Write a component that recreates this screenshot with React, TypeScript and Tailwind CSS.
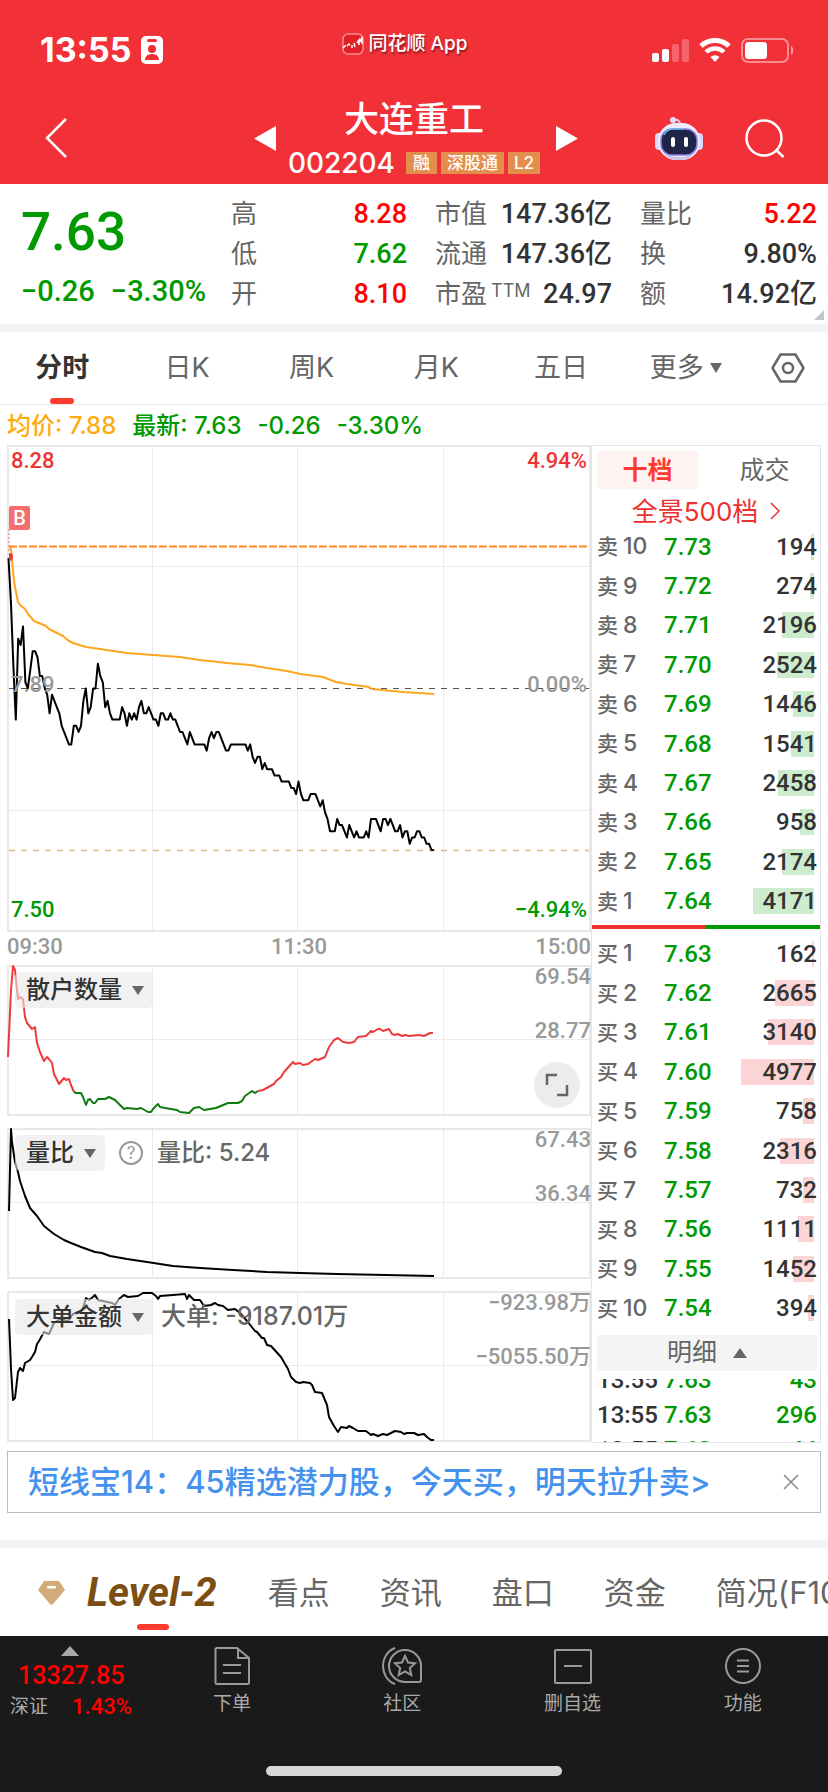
import React, { useState } from "react";
import clsx from "clsx";

const PREV_CLOSE = 789;

// one price per minute since the open, as ticks of 0.01 away from the previous close
const ticks = [
  21, 14, 4, -5, 8, 7, 10, 1, 0, 3, 6, 6, 5, 2, 2, 0, -1, -4, -1, -2,
  -3, -4, -6, -7, -8, -9, -9, -6, -6, -7, -6, -2, 0, -4, -3, 0, 0, 4, 2, 1,
  -3, -2, -4, -5, -5, -5, -5, -3, -4, -6, -4, -5, -4, -5, -3, -2, -4, -4, -3, -4,
  -5, -5, -6, -4, -4, -5, -5, -4, -5, -5, -6, -7, -7, -8, -9, -7, -8, -9, -9, -9,
  -9, -9, -10, -8, -7, -8, -7, -7, -8, -9, -10, -10, -9, -9, -9, -9, -9, -9, -9, -10,
  -9, -11, -12, -11, -11, -13, -12, -13, -13, -13, -14, -14, -14, -15, -15, -15, -15, -16, -16, -17,
  -15, -17, -18, -18, -18, -17, -17, -17, -18, -19, -18, -20, -21, -23, -23, -23, -21, -22, -22, -23,
  -24, -22, -23, -24, -23, -24, -24, -24, -23, -24, -21, -21, -21, -22, -23, -21, -21, -22, -21, -22,
  -23, -23, -22, -24, -23, -23, -25, -24, -24, -23, -23, -24, -24, -25, -25, -26, -26,
];

const pricePoints = ticks
  .map((t, i) => `${(1.5 + i * 2.417).toFixed(1)},${(243.5 - t * 6.21).toFixed(1)}`)
  .join(" ");

const avgPoints =
  "2,102 4,103 6,127 8,142 11,157 13,160 18,164 21,169 27,176 39,181 42,184 56,191 62,196 66,198 79,202 93,204 120,208 146,210 173,212 193,215 220,218 243,220 260,223 280,226 293,229 316,232 329,237 340,239 362,242 365,244 396,247 427,249";

const retailFall =
  "1,92 4,25 6,1 8,5 11,34 13,32 16,34 18,52 20,58 25,64 28,62 30,78 33,87 37,96 40,92 42,94 45,98 47,109 52,119 57,113 59,115 62,114 64,120 67,127";
const retailLow =
  "67,127 69,128 74,128 76,132 79,140 81,135 83,134 86,138 88,138 91,134 98,134 102,132 108,135 112,139 117,144 120,143 130,144 134,143 141,147 144,147 146,144 151,139 153,142 158,143 170,145 173,147 182,148 187,143 192,142 197,145 209,143 221,138 231,138 235,136 238,131 245,126 248,128 251,126";
const retailRise =
  "251,126 256,125 267,119 269,116 274,112 277,107 286,97 288,99 293,98 296,100 301,99 308,94 311,95 318,92 322,82 327,75 331,73 336,77 342,78 347,77 351,72 359,71 364,66 366,67 371,64 373,64 376,66 382,64 385,69 388,70 391,69 395,71 398,70 402,71 412,70 417,71 423,68 426,68";

const ratioPoints =
  "2,83 4,1 5,14 8,34 11,44 13,53 16,62 18,68 23,80 30,88 37,98 47,106 57,112 64,115 74,119 88,124 95,125 103,128 120,131 140,134 166,138 193,140 226,142 260,144 293,145 330,146 427,148";

const bigOrderPoints =
  "2,28 4,78 6,109 8,107 11,81 13,77 16,80 18,72 23,69 25,66 28,61 30,53 32,50 37,41 42,43 47,32 53,28 61,30 66,23 74,20 76,17 79,7 82,9 86,6 88,4 91,9 105,12 108,14 112,8 117,4 121,6 131,5 136,2 145,2 149,5 151,8 153,5 166,4 178,3 180,8 182,4 187,9 193,9 197,15 204,14 208,12 211,14 216,15 221,19 228,18 233,22 240,30 248,40 250,41 255,47 257,47 260,54 264,55 274,66 281,78 284,86 289,91 293,92 296,91 303,92 305,94 308,101 315,102 320,114 322,126 327,135 331,141 334,136 340,137 342,135 346,137 351,140 359,140 364,144 366,143 371,145 376,143 380,144 388,140 394,141 397,143 400,142 407,142 411,144 417,143 420,146 424,149 427,149";

const sellVolumes = [194, 274, 2196, 2524, 1446, 1541, 2458, 958, 2174, 4171];
const buyVolumes = [162, 2665, 3140, 4977, 758, 2316, 732, 1111, 1452, 394];
const MAX_VOLUME = 4977;

const sells = sellVolumes.map((volume, i) => ({ label: "卖", level: 10 - i, price: ((773 - i) / 100).toFixed(2), volume }));
const buys = buyVolumes.map((volume, i) => ({ label: "买", level: i + 1, price: ((763 - i) / 100).toFixed(2), volume }));

const trades = [
  { time: "13:55", price: "7.63", volume: 43 },
  { time: "13:55", price: "7.63", volume: 296 },
  { time: "13:55", price: "7.63", volume: 44 },
];

const NUM = "font-[family-name:Roboto,'Noto_Sans_CJK_SC',sans-serif] font-medium";

function StatusBar() {
  return (
    <div className="grid grid-cols-3 items-center h-[100px] pl-10 pr-[34px]">
      <div className="flex items-center gap-[10px]">
        <span className="text-[34px] leading-9 font-bold">13:55</span>
        <svg width="22" height="28" viewBox="0 0 22 28" aria-hidden="true">
          <rect width="22" height="28" rx="5" fill="#fff" />
          <rect x="6" y="3" width="10" height="3" rx="1.5" fill="#f23038" />
          <circle cx="11" cy="13" r="4" fill="#f23038" />
          <path d="M4 24c0-4 3-6 7-6s7 2 7 6z" fill="#f23038" />
        </svg>
      </div>
      <div className="flex items-center justify-center gap-1 pb-3 pr-6">
        <svg width="22" height="22" viewBox="0 0 22 22" fill="none" aria-hidden="true">
          <rect x="1" y="1" width="20" height="20" rx="5" fill="#e01f27" stroke="#f98d91" strokeWidth="1.5" />
          <path d="M1 15l2-2v1M5 13l2-2 1 1M10 12v3M12 10l1 4M15 10l2-3v5M18 9l2-5v7" stroke="#fff" strokeWidth="1.5" />
        </svg>
        <span className="text-[19px] leading-6 font-medium whitespace-nowrap [text-shadow:1px_2px_2px_rgba(0,0,0,0.45)]">
          同花顺 App
        </span>
      </div>
      <div className="flex items-center justify-end gap-2.5">
        <svg width="37" height="23" viewBox="0 0 37 23" fill="#fff" aria-hidden="true">
          <rect y="14" width="7" height="9" rx="2" />
          <rect x="10" y="10" width="7" height="13" rx="2" />
          <rect x="20" y="5" width="7" height="18" rx="2" opacity="0.25" />
          <rect x="30" width="7" height="23" rx="2" opacity="0.25" />
        </svg>
        <svg width="32" height="24" viewBox="0 0 32 24" fill="none" stroke="#fff" aria-hidden="true">
          <path d="M2 8a20.5 20.5 0 0 1 28 0" strokeWidth="5" />
          <path d="M7 14a13 13 0 0 1 18 0" strokeWidth="4.5" />
          <path d="M16 24l-4.5-5a6.5 6.5 0 0 1 9 0z" fill="#fff" stroke="none" />
        </svg>
        <svg width="53" height="25" viewBox="0 0 53 25" fill="none" aria-hidden="true">
          <rect x="1" y="1" width="46" height="23" rx="6" stroke="#fff" strokeOpacity="0.45" strokeWidth="2" />
          <rect x="4" y="4" width="22" height="17" rx="3.5" fill="#fff" />
          <path d="M50 8c3 1 3 8 0 9z" fill="#fff" fillOpacity="0.5" />
        </svg>
      </div>
    </div>
  );
}

function RobotIcon() {
  return (
    <svg width="48" height="46" viewBox="0 0 48 46" fill="none" aria-hidden="true">
      <path d="M18 4c4-1 7 0 7 5" stroke="#d9d5f5" strokeWidth="2" />
      <circle cx="18" cy="4" r="3" fill="#e6dcf5" />
      <rect x="0" y="17" width="8" height="17" rx="4" fill="#d5d8f8" />
      <rect x="40" y="17" width="8" height="17" rx="4" fill="#d5d8f8" />
      <rect x="3" y="7" width="42" height="37" rx="18" fill="#edecfb" />
      <path d="M8 35c6 8 26 8 32 0-3 7-9 9-16 9s-13-2-16-9z" fill="#c9c6ec" />
      <rect x="6" y="13" width="36" height="26" rx="11" fill="#1f2547" stroke="#8f7be8" strokeWidth="1.5" />
      <path d="M9 19c2-4 5-6 10-6h10" stroke="#4fd5e8" strokeWidth="1.2" />
      <rect x="16" y="21" width="4" height="10" rx="2" fill="#fff" />
      <rect x="29" y="21" width="4" height="10" rx="2" fill="#fff" />
    </svg>
  );
}

function Header() {
  return (
    <header className="bg-[#f23038] text-white">
      <StatusBar />
      <div className="grid grid-cols-[1fr_auto_1fr] h-[84px]">
        <div className="flex justify-between items-start pl-[44px] pt-[18px]">
          <button aria-label="返回">
            <svg width="24" height="40" viewBox="0 0 24 40" fill="none" stroke="#fff" strokeWidth="2.5">
              <path d="M22 1L3 20l19 19" />
            </svg>
          </button>
          <button aria-label="上一只" className="pt-2 pr-3">
            <svg width="22" height="25" viewBox="0 0 22 25" fill="#fff">
              <path d="M22 0v25L0 12.5z" />
            </svg>
          </button>
        </div>
        <div className="flex flex-col items-center">
          <h1 className="text-[35px] leading-[38px] font-medium">大连重工</h1>
          <div className="flex items-center gap-1 h-[34px] mt-2 text-[17px] font-medium">
            <span className="text-[28px] font-medium pr-[7px]">002204</span>
            <span className="h-[22px] leading-[22px] px-[7px] bg-[#e38e4c]">融</span>
            <span className="h-[22px] leading-[22px] px-[6px] bg-[#e38e4c]">深股通</span>
            <span className="h-[22px] leading-[22px] px-[6px] bg-[#e38e4c]">L2</span>
          </div>
        </div>
        <div className="flex justify-between items-start pr-[43px] pt-4">
          <button aria-label="下一只" className="pt-[10px] pl-4">
            <svg width="22" height="25" viewBox="0 0 22 25" fill="#fff">
              <path d="M0 0v25l22-12.5z" />
            </svg>
          </button>
          <div className="flex items-start gap-[42px]">
            <button aria-label="智能助手">
              <RobotIcon />
            </button>
            <button aria-label="搜索" className="pt-[3px]">
              <svg width="40" height="39" viewBox="0 0 40 39" fill="none" stroke="#fff" strokeWidth="2.5">
                <circle cx="19" cy="19" r="17.5" />
                <path d="M31 31l7.5 7" />
              </svg>
            </button>
          </div>
        </div>
      </div>
    </header>
  );
}

type Stat = { label: string; value: string; color?: string; sup?: string };

const statColumns: Stat[][] = [
  [
    { label: "高", value: "8.28", color: "text-[#ff0000]" },
    { label: "低", value: "7.62", color: "text-[#009900]" },
    { label: "开", value: "8.10", color: "text-[#ff0000]" },
  ],
  [
    { label: "市值", value: "147.36亿" },
    { label: "流通", value: "147.36亿" },
    { label: "市盈", value: "24.97", sup: "TTM" },
  ],
  [
    { label: "量比", value: "5.22", color: "text-[#ff0000]" },
    { label: "换", value: "9.80%" },
    { label: "额", value: "14.92亿" },
  ],
];

function Quote() {
  return (
    <section className="relative grid grid-cols-[minmax(0,1fr)_176px_177px_177px] gap-x-7 pl-[21px] pr-[11px] pt-[10px] h-[140px]">
      <div className={clsx(NUM, "text-[#009900] whitespace-nowrap")}>
        <div className="text-[53px] leading-[76px]">7.63</div>
        <div className="flex gap-4 text-[29px] leading-[42px]">
          <span>−0.26</span>
          <span>−3.30%</span>
        </div>
      </div>
      {statColumns.map((col, i) => (
        <dl key={i}>
          {col.map((s) => (
            <div key={s.label} className="flex justify-between h-10 leading-10 whitespace-nowrap">
              <dt className="flex text-[26px] text-[#666]">
                {s.label}
                {s.sup && <span className="text-[18px] leading-[34px] pl-1">{s.sup}</span>}
              </dt>
              <dd className={clsx(NUM, "text-[27px]", s.color ?? "text-[#333]")}>{s.value}</dd>
            </div>
          ))}
        </dl>
      ))}
      <svg className="absolute right-1 bottom-1" width="10" height="10" aria-hidden="true">
        <path d="M10 0v10H0z" fill="#c4c4c4" />
      </svg>
    </section>
  );
}

const periods = ["分时", "日K", "周K", "月K", "五日", "更多"];

function PeriodTabs() {
  const [active, setActive] = useState("分时");
  return (
    <nav className="flex h-[73px] border-b border-[#ebebeb]">
      {periods.map((p) => (
        <button
          key={p}
          onClick={() => setActive(p)}
          className={clsx(
            "relative flex-1 flex items-center justify-center text-[27px]",
            p === active ? "font-bold text-[#333]" : "text-[#666]"
          )}
        >
          {p}
          {p === "更多" && (
            <svg className="ml-1.5" width="12" height="10" aria-hidden="true">
              <path d="M0 0h12L6 10z" fill="#666" />
            </svg>
          )}
          {p === active && <span className="absolute bottom-0 w-6 h-1.5 rounded-[3px] bg-[#ff3b30]" />}
        </button>
      ))}
      <button aria-label="设置" className="w-20 flex items-center justify-center">
        <svg width="34" height="30" viewBox="0 0 34 30" fill="none" stroke="#666" strokeWidth="2.5">
          <path d="M9.5 1.5h15L32.5 15l-8 13.5h-15L1.5 15z" strokeLinejoin="round" />
          <circle cx="17" cy="15" r="5" />
        </svg>
      </button>
    </nav>
  );
}

function GridLines({ rows, height }: { rows: number[]; height: number }) {
  return (
    <g stroke="#ebebeb">
      {[145.5, 290.5, 436.5].map((x) => (
        <line key={x} x1={x} x2={x} y1="0" y2={height} />
      ))}
      {rows.map((y) => (
        <line key={y} x1="0" x2="584" y1={y} y2={y} />
      ))}
    </g>
  );
}

function PriceChart() {
  return (
    <div className={clsx(NUM, "relative h-[487px] text-[22px] leading-7")}>
      <svg className="block w-full h-full" viewBox="0 0 584 487" preserveAspectRatio="none" fill="none">
        <GridLines rows={[121.5, 365.5]} height={487} />
        <line x1="2" x2="584" y1="243.5" y2="243.5" stroke="#555" strokeDasharray="6 6" />
        <line x1="2" x2="584" y1="405.5" y2="405.5" stroke="#dcb88a" strokeWidth="1.5" strokeDasharray="6 6" />
        <line x1="2" x2="580" y1="101.5" y2="101.5" stroke="#ff8a1f" strokeWidth="2" strokeDasharray="8 2" />
        <rect x="1" y="1" width="582" height="485" stroke="#e8e8e8" strokeWidth="2" />
        <polyline points={pricePoints} stroke="#000" strokeWidth="2" strokeLinejoin="round" />
        <polyline points={avgPoints} stroke="#ffa51f" strokeWidth="2" strokeLinejoin="round" />
        <path d="M2 84v24" stroke="#f46e6e" strokeDasharray="2 2" />
        <path d="M2 108a4 4 0 0 1 0 8z" fill="#ee3a3a" />
      </svg>
      <span className="absolute left-1 top-[2px] text-[#ee3333]">8.28</span>
      <span className="absolute right-1 top-[2px] text-[#ee3333]">4.94%</span>
      <span className="absolute left-1 top-[226px] text-[#999]">{(PREV_CLOSE / 100).toFixed(2)}</span>
      <span className="absolute right-1 top-[226px] text-[#999]">0.00%</span>
      <span className="absolute left-1 bottom-2 text-[#009900]">7.50</span>
      <span className="absolute right-1 bottom-2 text-[#009900]">−4.94%</span>
      <span className="absolute left-0.5 top-[61px] w-[21px] h-6 rounded-xs bg-[#f46e6e] text-white text-[20px] leading-6 text-center">
        B
      </span>
    </div>
  );
}

type PanelProps = {
  name: string;
  values: [string, string];
  note?: string;
  help?: boolean;
  children: React.ReactNode;
};

function IndicatorPanel({ name, values, note, help, children }: PanelProps) {
  return (
    <div className="relative h-[151px]">
      <svg className="block w-full h-full" viewBox="0 0 584 151" preserveAspectRatio="none" fill="none" strokeWidth="2" strokeLinejoin="round">
        <g strokeWidth="1">
          <GridLines rows={[74.5]} height={151} />
        </g>
        <rect x="1" y="1" width="582" height="149" stroke="#e8e8e8" />
        {children}
      </svg>
      <div className="absolute left-2 top-[7px] flex items-center text-[24px] text-[#666]">
        <div className="relative">
          <select
            aria-label="指标"
            defaultValue={name}
            className="block field-sizing-content appearance-none h-9 pl-[11px] pr-[31px] rounded-[5px] bg-[#e8e8e8]/60 font-medium text-[#333]"
          >
            <option>{name}</option>
          </select>
          <svg className="absolute right-[9px] top-[14px] pointer-events-none" width="12" height="9" aria-hidden="true">
            <path d="M0 0h12L6 9z" fill="#666" />
          </svg>
        </div>
        {help && (
          <button aria-label="说明" className="ml-[14px] size-6 rounded-full border-2 border-[#999] text-[17px] leading-5 text-[#999]">
            ?
          </button>
        )}
        {note && <span className={clsx("font-medium", help ? "ml-[14px] text-[24px]" : "ml-2 text-[25px]")}>{note}</span>}
      </div>
      <div className={clsx(NUM, "absolute right-0 -top-1 text-right text-[22px] text-[#999]")}>
        <div className="leading-8">{values[0]}</div>
        <div className="leading-8 mt-[22px]">{values[1]}</div>
      </div>
    </div>
  );
}

function Charts() {
  return (
    <div className="flex-1 min-w-0">
      <PriceChart />
      <div className={clsx(NUM, "grid grid-cols-3 h-[33px] text-[22px] leading-[30px] text-[#999]")}>
        <span>09:30</span>
        <span className="text-center">11:30</span>
        <span className="text-right">15:00</span>
      </div>
      <div className="flex flex-col gap-3">
        <div className="relative">
          <IndicatorPanel name="散户数量" values={["69.54", "28.77"]}>
            <polyline points={retailFall} stroke="#ee3a3a" />
            <polyline points={retailLow} stroke="#107a10" />
            <polyline points={retailRise} stroke="#ee3a3a" />
          </IndicatorPanel>
          <button aria-label="全屏" className="absolute right-[11px] bottom-2 size-[46px] rounded-full bg-[#ececec] flex items-center justify-center">
            <svg width="24" height="24" viewBox="0 0 24 24" fill="none" stroke="#666" strokeWidth="2.5">
              <path d="M2 12V2h10M22 12v10H12" />
            </svg>
          </button>
        </div>
        <IndicatorPanel name="量比" values={["67.43", "36.34"]} note="量比: 5.24" help>
          <polyline points={ratioPoints} stroke="#000" />
        </IndicatorPanel>
        <IndicatorPanel name="大单金额" values={["−923.98万", "−5055.50万"]} note="大单: -9187.01万">
          <polyline points={bigOrderPoints} stroke="#000" />
        </IndicatorPanel>
      </div>
    </div>
  );
}

function DepthTable({ rows, barColor }: { rows: typeof sells; barColor: string }) {
  return (
    <table className="w-full h-[394px] text-[24px] leading-[26px]">
      <tbody>
        {rows.map((r) => (
          <tr key={r.level}>
            <td className="w-[67px] p-0 text-[23px] font-medium text-[#666] whitespace-nowrap">
              <span className="text-[21px] pr-[5px]">{r.label}</span>
              {r.level}
            </td>
            <td className={clsx(NUM, "p-0 text-[#009900]")}>{r.price}</td>
            <td className={clsx(NUM, "p-0 text-right text-[#333]")}>
              <span className="relative block">
                <span
                  className={clsx("absolute right-[3px] top-0 h-[26px]", barColor)}
                  style={{ width: Math.round((r.volume / MAX_VOLUME) * 73) }}
                />
                <span className="relative">{r.volume}</span>
              </span>
            </td>
          </tr>
        ))}
      </tbody>
    </table>
  );
}

function OrderBook() {
  const [tab, setTab] = useState("十档");
  return (
    <aside className="w-[230px] border border-[#e4e4e4]">
      <div className="flex px-[5px] pt-[5px]">
        {["十档", "成交"].map((t) => (
          <button
            key={t}
            onClick={() => setTab(t)}
            className={clsx(
              "flex-1 h-[38px] rounded-[4px] text-[25px] leading-[38px]",
              t === tab ? "bg-[#fff3f2] font-bold text-[#ff3b30]" : "text-[#666] pl-4"
            )}
          >
            {t}
          </button>
        ))}
      </div>
      <a href="#depth" className="flex items-center justify-center gap-3 h-[38px] pt-1.5 text-[26px] text-[#ee3030]">
        全景500档
        <svg width="10" height="18" viewBox="0 0 10 18" fill="none" stroke="#ee3030" strokeWidth="1.5">
          <path d="M1 1l8 8-8 8" />
        </svg>
      </a>
      <div className="pl-[5px] pr-[3px]">
        <DepthTable rows={sells} barColor="bg-[#cdebcd]" />
      </div>
      <div className="flex h-1 mt-1 mb-[5px]">
        <div className="flex-1 bg-[#ee3030]" />
        <div className="flex-1 bg-[#009900]" />
      </div>
      <div className="pl-[5px] pr-[3px]">
        <DepthTable rows={buys} barColor="bg-[#fbd5d5]" />
        <button className="flex items-center justify-center gap-4 w-full h-9 mt-[7px] bg-[#f4f4f4] text-[25px] text-[#666]">
          明细
          <svg width="14" height="10" aria-hidden="true">
            <path d="M0 10h14L7 0z" fill="#666" />
          </svg>
        </button>
        <div className="h-[63px] mt-2 overflow-hidden">
          <table className={clsx(NUM, "w-full -mt-4 text-[24px] leading-[35px]")}>
            <tbody>
              {trades.map((t, i) => (
                <tr key={i}>
                  <td className="w-[67px] p-0 text-[#333]">{t.time}</td>
                  <td className="p-0 text-[#009900]">{t.price}</td>
                  <td className="p-0 text-right text-[#009900]">{t.volume}</td>
                </tr>
              ))}
            </tbody>
          </table>
        </div>
      </div>
    </aside>
  );
}

function Banner() {
  return (
    <div className="flex items-center justify-between h-[62px] mx-[7px] mt-2 pl-5 pr-[21px] border border-[#bbb]">
      <a href="#promo" className="text-[31px] font-medium text-[#4592ee] whitespace-nowrap">
        短线宝14：45精选潜力股，今天买，明天拉升卖&gt;
      </a>
      <button aria-label="关闭">
        <svg width="16" height="16" viewBox="0 0 16 16" stroke="#888" strokeWidth="1.5">
          <path d="M1 1l14 14M15 1L1 15" />
        </svg>
      </button>
    </div>
  );
}

function ContentTabs() {
  return (
    <nav className="flex h-[88px] pl-[38px] pt-0.5 overflow-hidden text-[31px] text-[#666] whitespace-nowrap">
      <button className="relative flex items-center gap-[22px] mr-[51px]">
        <svg width="27" height="24" viewBox="0 0 27 24" aria-hidden="true">
          <path d="M6 0h15l6 9-12 14q-1.5 1.5-3 0L0 9z" fill="#d2ab78" />
          <rect x="9" y="5" width="9" height="2.5" rx="1" fill="#fff" />
        </svg>
        <span className="font-[family-name:Roboto,sans-serif] text-[40px] font-bold italic text-[#7d4e12]">Level-2</span>
        <span className="absolute left-[99px] bottom-1.5 w-8 h-1.5 rounded-[3px] bg-[#ff3b30]" />
      </button>
      <div className="flex gap-[50px]">
        {["看点", "资讯", "盘口", "资金", "简况(F10)"].map((t) => (
          <button key={t}>{t}</button>
        ))}
      </div>
    </nav>
  );
}

const navItems = [
  {
    label: "下单",
    icon: (
      <>
        <path d="M25 2H5q-1.5 0-1.5 1.5v33Q3.5 38 5 38h30.5q1.5 0 1.5-1.5V12z" />
        <path d="M26 2v10h11M11 19h18M11 27h18" />
      </>
    ),
  },
  {
    label: "社区",
    icon: (
      <>
        <path d="M13 2C-3 8-3 32 13 38" />
        <path d="M23 4a16 16 0 1 0 0 32h14q2 0 2-2V20A16 16 0 0 0 23 4z" />
        <path d="M23 10l3 6.5 7 .8-5.2 4.7 1.5 7-6.3-3.5-6.3 3.5 1.5-7-5.2-4.7 7-.8z" />
      </>
    ),
  },
  { label: "删自选", icon: <path d="M3 4h34q1 0 1 1v31q0 1-1 1H3q-1 0-1-1V5q0-1 1-1zM11 20h18" /> },
  {
    label: "功能",
    icon: (
      <>
        <circle cx="20" cy="20" r="17" />
        <path d="M14 14.5h12M14 20h12M14 25.5h12" />
      </>
    ),
  },
];

function BottomBar() {
  return (
    <footer className="h-[156px] bg-[#1a1a1a]">
      <div className="flex h-[130px]">
        <button className={clsx(NUM, "w-[147px] flex flex-col items-start pt-[10px] text-[#ff0000] whitespace-nowrap")}>
          <svg className="ml-[61px]" width="18" height="10" aria-hidden="true">
            <path d="M0 10h18L9 0z" fill="#aaa" />
          </svg>
          <span className="pl-[18px] pt-[5px] text-[25px] leading-[30px]">13327.85</span>
          <span className="flex items-center gap-6 pl-[10px] pt-[2px] text-[22px] leading-[28px]">
            <span className="text-[19px] font-normal text-[#aaa]">深证</span>
            1.43%
          </span>
        </button>
        {navItems.map((n) => (
          <button key={n.label} className="flex-1 flex flex-col items-center pt-[10px] text-[19px] text-[#aaa]">
            <svg width="40" height="40" viewBox="0 0 40 40" fill="none" stroke="#999" strokeWidth="2">
              {n.icon}
            </svg>
            <span className="leading-7 pt-1">{n.label}</span>
          </button>
        ))}
      </div>
      <div className="mx-auto w-[296px] h-[10px] rounded-full bg-[#d8d8d8]" />
    </footer>
  );
}

export default function App() {
  return (
    <div className="bg-white overflow-hidden font-[family-name:Inter,'Noto_Sans_CJK_SC',sans-serif]">
      <Header />
      <Quote />
      <div className="h-2 bg-[#f4f4f4]" />
      <PeriodTabs />
      <div className="flex gap-4 h-10 pl-[7px] text-[24px] leading-[41px] font-medium text-[#009900]">
        <span className="text-[#ffab0f]">均价: 7.88</span>
        <span>最新: 7.63</span>
        <span>-0.26</span>
        <span>-3.30%</span>
      </div>
      <main className="flex px-[7px]">
        <Charts />
        <OrderBook />
      </main>
      <Banner />
      <div className="h-2 mt-[27px] bg-[#f4f4f4]" />
      <ContentTabs />
      <BottomBar />
    </div>
  );
}
